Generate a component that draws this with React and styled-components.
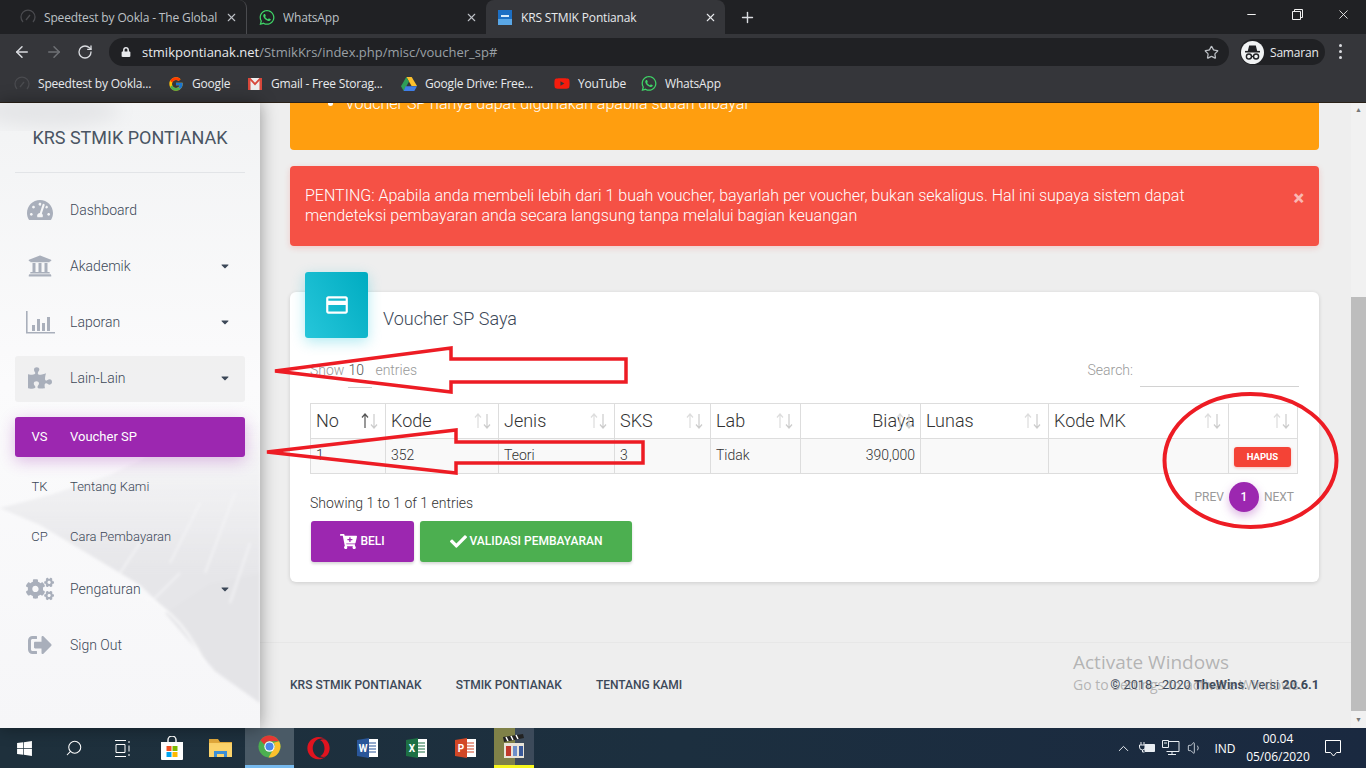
import styled, { createGlobalStyle } from "styled-components";
import { ArrowLeft, ArrowRight, RotateCw, Star, Plus, X, Minus, Search as SearchGlyph, ChevronUp, Volume1 } from "lucide-react";
import { FaWhatsapp, FaYoutube, FaWindows, FaOpera, FaTachometerAlt, FaUniversity, FaPuzzlePiece, FaCogs, FaSignOutAlt, FaCartPlus, FaCheck, FaLock, FaCaretDown } from "react-icons/fa";
import { FcGoogle } from "react-icons/fc";
import { MdCreditCard } from "react-icons/md";

const GlobalStyle = createGlobalStyle`
  html, body { margin: 0; padding: 0; overflow: hidden; }
  body { font-family: Roboto, "Liberation Sans", sans-serif; background: #eee; }
  * { box-sizing: border-box; }
`;

const Screen = styled.div`
  position: relative;
  width: 1366px;
  height: 768px;
  display: flex;
  flex-direction: column;
  overflow: hidden;
`;

/* browser */
const TabStrip = styled.div`
  height: 34px;
  background: #202124;
  display: flex;
  align-items: stretch;
  font: 12px "Open Sans", "Liberation Sans", sans-serif;
  letter-spacing: -0.15px;
  color: #bdc1c6;
`;
const Tab = styled.div`
  width: ${(p) => p.$w}px;
  display: flex;
  align-items: center;
  gap: 8px;
  padding: 0 8px 0 ${(p) => p.$left}px;
  border-radius: 8px 8px 0 0;
  background: ${(p) => (p.$active ? "#35363a" : "transparent")};
  color: ${(p) => (p.$active ? "#e8eaed" : "#bdc1c6")};
  border-right: ${(p) => (p.$sep ? "1px solid #4a4b4f" : "none")};
`;
const TabTitle = styled.span`
  flex: 1;
  white-space: nowrap;
  overflow: hidden;
`;
const NewTab = styled.div`
  width: 44px;
  display: flex;
  align-items: center;
  justify-content: center;
  color: #dadce0;
`;
const WindowButtons = styled.div`
  margin-left: auto;
  display: flex;
  color: #f1f1f1;
`;
const WindowButton = styled.div`
  width: 46px;
  height: 28px;
  display: flex;
  align-items: center;
  justify-content: center;
`;
const Favicon = styled.div`
  width: 16px;
  height: 16px;
  flex: none;
  display: flex;
  align-items: center;
  justify-content: center;
`;
const Toolbar = styled.div`
  height: 32px;
  background: #35363a;
  display: flex;
  align-items: flex-end;
  color: #dadce0;
  position: relative;
`;
const NavButtons = styled.div`
  width: 109px;
  height: 28px;
  display: flex;
  align-items: center;
  gap: 14px;
  padding-left: 13px;
`;
const Omnibox = styled.div`
  width: 1120px;
  height: 28px;
  border-radius: 14px;
  background: #202124;
  display: flex;
  align-items: center;
  padding: 0 10px 0 12px;
  font: 13px "Open Sans", "Liberation Sans", sans-serif;
  color: #9aa0a6;
`;
const Host = styled.span`
  color: #e8eaed;
  margin-left: 11px;
`;
const OmniStar = styled.div`
  margin-left: auto;
  display: flex;
  color: #bdc1c6;
`;
const ProfileChip = styled.div`
  margin: 0 0 1px 11px;
  width: 85px;
  height: 26px;
  border-radius: 13px;
  background: #202124;
  display: flex;
  align-items: center;
  gap: 6px;
  font: 12px "Open Sans", "Liberation Sans", sans-serif;
  letter-spacing: -0.2px;
  color: #e8eaed;
`;
const ProfileBadge = styled.div`
  width: 23px;
  height: 23px;
  margin-left: 1px;
  border-radius: 50%;
  background: #f1f3f4;
  display: flex;
  align-items: center;
  justify-content: center;
`;
const MenuDots = styled.div`
  margin: 0 0 7px 14px;
  display: flex;
  flex-direction: column;
  gap: 3px;
`;
const Dot = styled.i`
  width: 3px;
  height: 3px;
  border-radius: 50%;
  background: #dadce0;
`;
const Bookmarks = styled.div`
  height: 37px;
  background: #35363a;
  border-bottom: 1px solid #2a2118;
  display: flex;
  align-items: center;
  padding-left: 14px;
  padding-bottom: 1px;
  font: 12px "Open Sans", "Liberation Sans", sans-serif;
  letter-spacing: -0.2px;
  color: #e8eaed;
`;
const Bookmark = styled.div`
  width: ${(p) => p.$w}px;
  display: flex;
  align-items: center;
  gap: 8px;
  white-space: nowrap;
`;

/* page */
const Body = styled.div`
  flex: 1;
  min-height: 0;
  display: flex;
`;
const Sidebar = styled.aside`
  position: relative;
  width: 260px;
  flex: none;
  padding: 0 15px;
  background: linear-gradient(180deg, #f2f3f4 0, #fbfbfc 45%, #f6f6f8 100%);
  box-shadow: 0 0 16px rgba(0, 0, 0, 0.38);
  overflow: hidden;
  z-index: 2;
`;
const Mountain = styled.svg`
  position: absolute;
  left: 0;
  top: 0;
  width: 260px;
  height: 625px;
`;
const SideInner = styled.div`
  position: relative;
`;
const Brand = styled.div`
  height: 70px;
  padding-top: 24px;
  border-bottom: 1px solid #e2e4e7;
  margin-bottom: 15px;
  text-align: center;
  font-size: 18px;
  line-height: 22px;
  color: #4a5563;
`;
const NavItem = styled.div`
  height: ${(p) => (p.$sub ? 40 : 46)}px;
  margin-bottom: ${(p) => (p.$gap !== undefined ? p.$gap : 10)}px;
  display: flex;
  align-items: center;
  padding: 0 14px 2px 10px;
  border-radius: 3px;
  font-size: ${(p) => (p.$sub ? 13 : 14)}px;
  font-weight: 300;
  color: #3c4858;
  background: ${(p) => (p.$active ? "#9c27b0" : p.$hover ? "rgba(200,200,200,.2)" : "transparent")};
  ${(p) => p.$active && "color:#fff;font-weight:400;box-shadow:0 4px 16px rgba(156,39,176,.3);"}
`;
const NavIcon = styled.div`
  width: 30px;
  margin-right: 15px;
  display: flex;
  justify-content: center;
  color: #a9afbb;
  font-size: ${(p) => p.$size || 24}px;
`;
const NavAbbr = styled.div`
  width: 29px;
  margin-right: 16px;
  text-align: center;
  font-weight: inherit;
`;
const Caret = styled.div`
  margin-left: auto;
  display: flex;
  color: #3c4858;
  font-size: 12px;
`;

const Content = styled.main`
  flex: 1;
  min-width: 0;
  background: #eee;
  overflow: hidden;
`;
const Wrap = styled.div`
  padding: 0 32px 0 30px;
`;
const WarnAlert = styled.div`
  height: 47px;
  background: #ff9e0f;
  border-radius: 0 0 4px 4px;
  color: #fff;
  font-size: 16px;
  font-weight: 300;
  overflow: hidden;
  margin-bottom: 16px;
`;
const WarnList = styled.ul`
  margin: -10px 0 0;
  padding-left: 55px;
  line-height: 22px;
`;
const DangerAlert = styled.div`
  position: relative;
  height: 80px;
  background: #f55145;
  border-radius: 4px;
  box-shadow: 0 2px 6px rgba(244, 67, 54, 0.2);
  color: #fff;
  font-size: 16px;
  font-weight: 300;
  line-height: 20px;
  padding: 20px 60px 0 15px;
  margin-bottom: 46px;
`;
const AlertClose = styled.div`
  position: absolute;
  right: 15px;
  top: 22px;
  font-size: 20px;
  font-weight: 900;
  line-height: 20px;
  color: rgba(255, 255, 255, 0.6);
`;
const Card = styled.section`
  height: 290px;
  background: #fff;
  border-radius: 6px;
  box-shadow: 0 1px 4px rgba(0, 0, 0, 0.14);
  padding: 0 20px;
`;
const CardHeader = styled.div`
  display: flex;
  margin: 0 0 0 -5px;
  height: 0;
`;
const CardIcon = styled.div`
  width: 63px;
  height: 66px;
  margin-top: -20px;
  flex: none;
  border-radius: 3px;
  background: linear-gradient(60deg, #26c6da, #00acc1);
  box-shadow: 0 4px 14px rgba(0, 188, 212, 0.3);
  display: flex;
  align-items: center;
  justify-content: center;
  color: #fff;
  font-size: 26px;
`;
const CardTitle = styled.h4`
  margin: 15px 0 0 15px;
  font-size: 18px;
  font-weight: 300;
  line-height: 24px;
  color: #3c4858;
  white-space: nowrap;
`;
const Controls = styled.div`
  display: flex;
  justify-content: space-between;
  padding-top: 66px;
  height: 111px;
  font-size: 14px;
  font-weight: 300;
  color: #999;
`;
const ShowLabel = styled.div`
  display: flex;
  align-items: flex-start;
  line-height: 24px;
`;
const PageSize = styled.span`
  width: 24px;
  margin: 0 3px 0 4px;
  height: 30px;
  color: #555;
  border-bottom: 1px solid #d2d2d2;
`;
const SearchLabel = styled.div`
  display: flex;
  align-items: flex-start;
  line-height: 24px;
`;
const SearchInput = styled.div`
  width: 159px;
  height: 29px;
  margin-left: 7px;
  border-bottom: 1px solid #d2d2d2;
`;
const Table = styled.table`
  width: 987px;
  table-layout: fixed;
  border-collapse: collapse;
  color: #333;
`;
const HeadCell = styled.th`
  position: relative;
  height: 35px;
  padding: 0 5px 2px;
  border: 1px solid #ddd;
  font-size: 18px;
  font-weight: 300;
  text-align: ${(p) => (p.$right ? "right" : "left")};
  color: #333;
`;
const SortMark = styled.svg`
  position: absolute;
  right: 6px;
  top: 8px;
`;
const BodyCell = styled.td`
  height: 35px;
  padding: 0 5px 2px;
  border: 1px solid #ddd;
  font-size: 14px;
  font-weight: 300;
  background: #f9f9f9;
  text-align: ${(p) => (p.$right ? "right" : "left")};
`;
const DeleteButton = styled.button`
  display: block;
  margin: 3px auto 0 0;
  width: 57px;
  height: 20px;
  border: 0;
  border-radius: 3px;
  background: #f44336;
  color: #fff;
  font: 700 9.5px Roboto, sans-serif;
  box-shadow: 0 1px 3px rgba(244, 67, 54, 0.3);
`;
const Below = styled.div`
  display: flex;
  justify-content: space-between;
  align-items: flex-start;
  margin-right: 2px;
`;
const InfoBlock = styled.div`
  font-size: 14px;
  font-weight: 300;
  color: #333;
`;
const InfoText = styled.div`
  padding-top: 19px;
  line-height: 20px;
  margin-bottom: 8px;
`;
const ActionRow = styled.div`
  display: flex;
  gap: 6px;
  padding-left: 1px;
`;
const ActionButton = styled.button`
  width: ${(p) => p.$w}px;
  height: 41px;
  border: 0;
  border-radius: 3px;
  background: ${(p) => p.$bg};
  box-shadow: 0 2px 3px rgba(0, 0, 0, 0.16);
  color: #fff;
  font: 500 12px Roboto, sans-serif;
  display: flex;
  align-items: center;
  justify-content: center;
  gap: 3px;
  padding-bottom: 2px;
  svg { font-size: 17px; }
`;
const Pager = styled.div`
  display: flex;
  align-items: center;
  gap: 5px;
  margin-top: 8px;
  padding-right: 3px;
  font-size: 12px;
  font-weight: 400;
  color: #999;
`;
const PageDot = styled.div`
  width: 30px;
  height: 30px;
  border-radius: 50%;
  background: #9c27b0;
  box-shadow: 0 4px 10px rgba(156, 39, 176, 0.35);
  color: #fff;
  font-weight: 500;
  display: flex;
  align-items: center;
  justify-content: center;
`;
const Footer = styled.footer`
  margin-top: 60px;
  height: 84px;
  border-top: 1px solid #e7e7e7;
  padding: 0 32px 0 30px;
  display: flex;
  align-items: center;
  justify-content: space-between;
  font-size: 12px;
  color: #3c4858;
`;
const FooterLinks = styled.div`
  display: flex;
  gap: 34px;
  font-weight: 500;
`;
const Copy = styled.div`
  font-size: 12.75px;
  font-weight: 400;
  strong { font-weight: 700; }
`;
const ScrollTrack = styled.div`
  width: 15px;
  flex: none;
  background: #f1f1f1;
  display: flex;
  flex-direction: column;
  align-items: center;
  color: #777;
`;
const ScrollArrow = styled.div`
  height: 15px;
  width: 100%;
  display: flex;
  align-items: center;
  justify-content: center;
  font-size: 7px;
  line-height: 7px;
`;
const ScrollThumb = styled.div`
  width: 100%;
  height: 414px;
  margin-top: auto;
  margin-bottom: 2px;
  background: #bdbdbd;
`;

/* taskbar */
const Taskbar = styled.div`
  height: 40px;
  background: linear-gradient(90deg, #1e303c 0, #1c2f3f 50%, #1a2940 100%);
  display: flex;
  align-items: stretch;
  color: #fff;
  font: 12px "Open Sans", "Liberation Sans", sans-serif;
`;
const TaskSlot = styled.div`
  width: 49px;
  display: flex;
  align-items: center;
  justify-content: center;
  background: ${(p) => (p.$open ? "#4a5a66" : "transparent")};
  border-bottom: ${(p) => (p.$open ? "3px solid #76b9ed" : "none")};
`;
const MovieSlot = styled(TaskSlot)`
  width: 40px;
  margin-left: 4px;
  background: linear-gradient(90deg, #7f8148 0 53%, #3c4a5a 53% 100%);
  border-bottom: 3px solid #f7f71e;
`;
const Tray = styled.div`
  margin-left: auto;
  padding-right: 13px;
  display: flex;
  align-items: center;
`;
const TrayIcon = styled.div`
  width: 24px;
  display: flex;
  justify-content: center;
  color: #e8edf2;
`;
const TrayLang = styled.div`
  width: 36px;
  text-align: center;
`;
const Clock = styled.div`
  width: 70px;
  text-align: center;
  line-height: 18px;
`;
const Notify = styled.div`
  width: 40px;
  display: flex;
  justify-content: center;
`;

/* overlays */
const Marks = styled.svg`
  position: absolute;
  left: 0;
  top: 0;
  pointer-events: none;
  z-index: 5;
`;
const Watermark = styled.div`
  position: absolute;
  left: 1073px;
  top: 650px;
  color: rgba(130, 130, 130, 0.55);
  font: 14px "Open Sans", "Liberation Sans", sans-serif;
  z-index: 4;
  pointer-events: none;
`;
const WatermarkHead = styled.div`
  font-size: 19px;
  line-height: 25px;
`;

const SortIcon = ({ up = "#ddd", down = "#ccc" }) => (
  <SortMark width="20" height="18" viewBox="0 0 20 18" fill="none" strokeWidth="1.2">
    <path d="M6 16V2M3 5.5 6 2l3 3.5" stroke={up} />
    <path d="M15 2v14M12 12.5l3 3.5 3-3.5" stroke={down} />
  </SortMark>
);

const BarChart = () => (
  <svg width="29" height="24" viewBox="0 0 29 24" fill="#a9afbb">
    <path d="M0 1h1.6v21H29v1.6H0z" />
    <path d="M6 15h3v6H6zM11 9h3v12h-3zM16 13h3v8h-3zM21 7h3v14h-3z" />
  </svg>
);

const Incognito = () => (
  <svg width="19" height="19" viewBox="0 0 24 24" fill="none" stroke="#202124" strokeWidth="1.8">
    <path d="M7 10 8.5 4h7L17 10z" fill="#202124" />
    <path d="M2.5 11h19" strokeWidth="2" />
    <circle cx="7.5" cy="17" r="3.2" />
    <circle cx="16.5" cy="17" r="3.2" />
    <path d="M10.7 17h2.6" />
  </svg>
);

const Gauge = () => (
  <svg width="16" height="16" viewBox="0 0 16 16" fill="none" stroke="#4a4b4f" strokeWidth="1.3">
    <path d="M3 13a7 7 0 1 1 10 0" />
    <path d="M6 11l4-5" />
  </svg>
);

const Gmail = () => (
  <svg width="16" height="14" viewBox="0 0 16 14">
    <path d="M1 1h14v12H1z" fill="#eee" />
    <path d="M1 1h2.5v12H1zM12.5 1H15v12h-2.5z" fill="#d8483b" />
    <path d="M1 1h2.5L8 5.8 12.5 1H15L8 8.5z" fill="#d8483b" />
  </svg>
);

const Drive = () => (
  <svg width="16" height="14" viewBox="0 0 16 14">
    <path d="M5.3 0h5.4l5.3 9h-5.4z" fill="#fbc02d" />
    <path d="M5.3 0 8 4.6 2.7 14 0 9.2z" fill="#2e9e58" />
    <path d="M4.6 9.2H16L13.3 14H2.7z" fill="#3f7ee8" />
  </svg>
);

const ChromeLogo = () => (
  <svg width="23" height="23" viewBox="0 0 24 24">
    <circle cx="12" cy="12" r="11.5" fill="#4caf50" />
    <path d="M12 .5A11.5 11.5 0 0 1 22 6.5H12A5.6 5.6 0 0 0 6.7 10L2.4 5.6A11.5 11.5 0 0 1 12 .5z" fill="#e53935" />
    <path d="M22 6.5A11.5 11.5 0 0 1 11 23.4l5-8.5A5.6 5.6 0 0 0 16.4 8z" fill="#fbc02d" />
    <circle cx="12" cy="12" r="5.4" fill="#fff" />
    <circle cx="12" cy="12" r="4.2" fill="#4a86e8" />
  </svg>
);

const TaskView = () => (
  <svg width="17" height="17" viewBox="0 0 17 17" fill="none" stroke="#fff" strokeWidth="1">
    <path d="M1 .5h11M1 16.5h11M2 4.5h9v8H2zM15 1v2M15 5.5v6M15 14v2" />
  </svg>
);

const StoreBag = () => (
  <svg width="24" height="24" viewBox="0 0 24 24">
    <path d="M8 7V4a4 4 0 0 1 8 0v3" fill="none" stroke="#fff" strokeWidth="1.4" />
    <path d="M1 6h22v17a1 1 0 0 1-1 1H2a1 1 0 0 1-1-1z" fill="#fff" />
    <path d="M6.500 10h5v5h-5z" fill="#f25022" />
    <path d="M12.500 10h5v5h-5z" fill="#7fba00" />
    <path d="M6.500 16h5v5h-5z" fill="#00a4ef" />
    <path d="M12.500 16h5v5h-5z" fill="#ffb900" />
  </svg>
);

const Folder = () => (
  <svg width="23" height="20" viewBox="0 0 23 20">
    <path d="M0 1h9l2 3h12v15H0z" fill="#e2a93b" />
    <path d="M0 5h23v14H0z" fill="#fbd36b" />
    <path d="M5 19v-6h13v6h-3v-3H8v3z" fill="#3d8fd6" />
  </svg>
);

const OfficeIcon = ({ color, letter }) => (
  <svg width="22" height="22" viewBox="0 0 22 22">
    <path d="M7 2h14v18H7z" fill="#fff" />
    <path d="M9 6h10M9 9h10M9 12h10M9 15h10" stroke={color} strokeWidth="1.2" />
    <path d="M0 3l12-2v20L0 19z" fill={color} />
    <text x="6" y="14.500" textAnchor="middle" fontSize="10" fontWeight="700" fontFamily="Roboto" fill="#fff">{letter}</text>
  </svg>
);

const Clapper = () => (
  <svg width="24" height="26" viewBox="0 0 24 26">
    <path d="M1 3 21 0l1 4L2 8z" fill="#222" />
    <path d="M4 3l2 4M9 2l2 4M14 1l2 4" stroke="#fff" strokeWidth="1.5" />
    <path d="M2 9h20v15H2z" fill="#e9e4d8" />
    <path d="M4 12h5v10H4z" fill="#c0392b" />
    <path d="M11 12h4v10h-4z" fill="#6d8fc9" />
    <path d="M17 12h4v10h-4z" fill="#3b5a9a" />
  </svg>
);

const Battery = () => (
  <svg width="18" height="14" viewBox="0 0 18 14" fill="none" stroke="#e8edf2">
    <path d="M3 1v3M6 1v3M1.500 4h6v2a3 3 0 0 1-6 0z" />
    <path d="M4.500 9v2h2" />
    <path d="M7 3.500h9.500v7H7z" fill="#e8edf2" />
  </svg>
);

const Network = () => (
  <svg width="18" height="16" viewBox="0 0 18 16" fill="none" stroke="#e8edf2">
    <path d="M4.500 1.500H17v10H4.500M10 11.500v3M6 14.500h8" />
    <path d="M.5.500h6v7h-6zM2 3h3" fill="#1c2f3f" />
  </svg>
);

const Bubble = () => (
  <svg width="17" height="17" viewBox="0 0 17 17" fill="none" stroke="#fff">
    <path d="M.5.500h15v12h-4l-3 3.500-3-3.500h-5z" />
  </svg>
);

const KrsFavicon = () => (
  <svg width="14" height="15" viewBox="0 0 14 15">
    <rect width="14" height="15" fill="#1c6fc4" />
    <rect y="9" width="14" height="6" fill="#5aa7e6" />
    <rect x="3" y="5" width="8" height="2" fill="#d8ecfb" />
  </svg>
);

const cols = [75, 113, 116, 96, 90, 120, 128, 180, 69];

const heads = [
  { label: "No", up: "#555" },
  { label: "Kode" },
  { label: "Jenis" },
  { label: "SKS" },
  { label: "Lab" },
  { label: "Biaya", right: true },
  { label: "Lunas" },
  { label: "Kode MK" },
  { label: "" },
];

function App() {
  return (
    <Screen>
      <GlobalStyle />

      <TabStrip>
        <Tab $w={247} $left={20} $sep>
          <Favicon><Gauge /></Favicon>
          <TabTitle>Speedtest by Ookla - The Global</TabTitle>
          <X size={13} />
        </Tab>
        <Tab $w={239} $left={12}>
          <Favicon><FaWhatsapp size={17} color="#3fd467" /></Favicon>
          <TabTitle>WhatsApp</TabTitle>
          <X size={13} />
        </Tab>
        <Tab $w={239} $left={11} $active>
          <Favicon><KrsFavicon /></Favicon>
          <TabTitle>KRS STMIK Pontianak</TabTitle>
          <X size={13} />
        </Tab>
        <NewTab><Plus size={17} /></NewTab>
        <WindowButtons>
          <WindowButton><Minus size={13} /></WindowButton>
          <WindowButton>
            <svg width="11" height="11" viewBox="0 0 11 11" fill="none" stroke="#f1f1f1"><path d="M.5 2.500h8v8h-8zM2.500 2.500v-2h8v8h-2" /></svg>
          </WindowButton>
          <WindowButton><X size={15} strokeWidth={1.4} /></WindowButton>
        </WindowButtons>
      </TabStrip>

      <Toolbar>
        <NavButtons>
          <ArrowLeft size={18} />
          <ArrowRight size={18} color="#6f7175" />
          <RotateCw size={16} />
        </NavButtons>
        <Omnibox>
          <FaLock size={10} color="#e8eaed" />
          <Host>stmikpontianak.net</Host>/StmikKrs/index.php/misc/voucher_sp#
          <OmniStar><Star size={15} /></OmniStar>
        </Omnibox>
        <ProfileChip>
          <ProfileBadge><Incognito /></ProfileBadge>
          Samaran
        </ProfileChip>
        <MenuDots><Dot /><Dot /><Dot /></MenuDots>
      </Toolbar>

      <Bookmarks>
        <Bookmark $w={154}><Favicon><Gauge /></Favicon>Speedtest by Ookla...</Bookmark>
        <Bookmark $w={79}><Favicon><FcGoogle size={16} /></Favicon>Google</Bookmark>
        <Bookmark $w={154}><Favicon><Gmail /></Favicon>Gmail - Free Storag...</Bookmark>
        <Bookmark $w={153}><Favicon><Drive /></Favicon>Google Drive: Free...</Bookmark>
        <Bookmark $w={87}><Favicon><FaYoutube size={17} color="#f61c0d" /></Favicon>YouTube</Bookmark>
        <Bookmark $w={90}><Favicon><FaWhatsapp size={17} color="#3fd467" /></Favicon>WhatsApp</Bookmark>
      </Bookmarks>

      <Body>
        <Sidebar>
          <Mountain viewBox="0 0 260 625">
            <defs>
              <linearGradient id="rock" x1="0" y1="310" x2="0" y2="470" gradientUnits="userSpaceOnUse">
                <stop offset="0" stopColor="#e6e6e9" stopOpacity="0" />
                <stop offset="1" stopColor="#e6e6e9" />
              </linearGradient>
              <filter id="soft"><feGaussianBlur stdDeviation="1.500" /></filter>
              <filter id="cloud"><feGaussianBlur stdDeviation="9" /></filter>
            </defs>
            <ellipse cx="50" cy="8" rx="70" ry="16" fill="#e4e5e7" filter="url(#cloud)" />
            <g filter="url(#soft)">
              <path d="M0 405 50 392 110 372 175 340 260 318V600L215 568 190 530 140 482 90 452 40 422z" fill="url(#rock)" />
              <path d="M165 510 210 480 260 470V600L215 568z" fill="#e4e4e7" />
              <path d="M120 470 140 440M170 460 200 400M205 470 235 390M150 500 180 470M230 500 250 440" stroke="#f5f5f7" strokeWidth="1.500" fill="none" />
              <path d="M130 490C160 495 185 520 205 560" stroke="#fafafb" strokeWidth="2" fill="none" />
            </g>
          </Mountain>
          <SideInner>
            <Brand>KRS STMIK PONTIANAK</Brand>
            <NavItem><NavIcon $size={26}><FaTachometerAlt /></NavIcon>Dashboard</NavItem>
            <NavItem><NavIcon><FaUniversity /></NavIcon>Akademik<Caret><FaCaretDown /></Caret></NavItem>
            <NavItem><NavIcon><BarChart /></NavIcon>Laporan<Caret><FaCaretDown /></Caret></NavItem>
            <NavItem $hover $gap={15}><NavIcon><FaPuzzlePiece /></NavIcon>Lain-Lain<Caret><FaCaretDown /></Caret></NavItem>
            <NavItem $sub $active><NavAbbr>VS</NavAbbr>Voucher SP</NavItem>
            <NavItem $sub><NavAbbr>TK</NavAbbr>Tentang Kami</NavItem>
            <NavItem $sub><NavAbbr>CP</NavAbbr>Cara Pembayaran</NavItem>
            <NavItem><NavIcon $size={28}><FaCogs /></NavIcon>Pengaturan<Caret><FaCaretDown /></Caret></NavItem>
            <NavItem><NavIcon><FaSignOutAlt /></NavIcon>Sign Out</NavItem>
          </SideInner>
        </Sidebar>

        <Content>
          <Wrap>
            <WarnAlert>
              <WarnList>
                <li>Voucher SP hanya dapat digunakan apabila sudah dibayar</li>
              </WarnList>
            </WarnAlert>
            <DangerAlert>
              PENTING: Apabila anda membeli lebih dari 1 buah voucher, bayarlah per voucher, bukan sekaligus. Hal ini supaya sistem dapat mendeteksi pembayaran anda secara langsung tanpa melalui bagian keuangan
              <AlertClose>×</AlertClose>
            </DangerAlert>

            <Card>
              <CardHeader>
                <CardIcon><MdCreditCard /></CardIcon>
                <CardTitle>Voucher SP Saya</CardTitle>
              </CardHeader>
              <Controls>
                <ShowLabel>Show<PageSize>10</PageSize>entries</ShowLabel>
                <SearchLabel>Search:<SearchInput /></SearchLabel>
              </Controls>
              <Table>
                <colgroup>
                  {cols.map((w, i) => <col key={i} width={w} />)}
                </colgroup>
                <thead>
                  <tr>
                    {heads.map((h, i) => (
                      <HeadCell key={i} $right={h.right}>
                        {h.label}
                        <SortIcon up={h.up} />
                      </HeadCell>
                    ))}
                  </tr>
                </thead>
                <tbody>
                  <tr>
                    <BodyCell>1</BodyCell>
                    <BodyCell>352</BodyCell>
                    <BodyCell>Teori</BodyCell>
                    <BodyCell>3</BodyCell>
                    <BodyCell>Tidak</BodyCell>
                    <BodyCell $right>390,000</BodyCell>
                    <BodyCell />
                    <BodyCell />
                    <BodyCell><DeleteButton>HAPUS</DeleteButton></BodyCell>
                  </tr>
                </tbody>
              </Table>
              <Below>
                <InfoBlock>
                  <InfoText>Showing 1 to 1 of 1 entries</InfoText>
                  <ActionRow>
                    <ActionButton $w={103} $bg="#9c27b0"><FaCartPlus />BELI</ActionButton>
                    <ActionButton $w={212} $bg="#4caf50"><FaCheck />VALIDASI PEMBAYARAN</ActionButton>
                  </ActionRow>
                </InfoBlock>
                <Pager>PREV<PageDot>1</PageDot>NEXT</Pager>
              </Below>
            </Card>
          </Wrap>

          <Footer>
            <FooterLinks>
              <span>KRS STMIK PONTIANAK</span>
              <span>STMIK PONTIANAK</span>
              <span>TENTANG KAMI</span>
            </FooterLinks>
            <Copy>© 2018 - 2020 <strong>TheWins</strong>. Versi <strong>20.6.1</strong></Copy>
          </Footer>
        </Content>

        <ScrollTrack>
          <ScrollArrow>▲</ScrollArrow>
          <ScrollThumb />
          <ScrollArrow>▼</ScrollArrow>
        </ScrollTrack>
      </Body>

      <Taskbar>
        <TaskSlot><FaWindows size={17} /></TaskSlot>
        <TaskSlot><SearchGlyph size={18} strokeWidth={1.4} style={{ transform: "scaleX(-1)" }} /></TaskSlot>
        <TaskSlot><TaskView /></TaskSlot>
        <TaskSlot><StoreBag /></TaskSlot>
        <TaskSlot><Folder /></TaskSlot>
        <TaskSlot $open><ChromeLogo /></TaskSlot>
        <TaskSlot><FaOpera size={23} color="#e0141f" /></TaskSlot>
        <TaskSlot><OfficeIcon color="#2a5699" letter="W" /></TaskSlot>
        <TaskSlot><OfficeIcon color="#1d7044" letter="X" /></TaskSlot>
        <TaskSlot><OfficeIcon color="#d24726" letter="P" /></TaskSlot>
        <MovieSlot><Clapper /></MovieSlot>
        <Tray>
          <TrayIcon><ChevronUp size={17} strokeWidth={1.4} /></TrayIcon>
          <TrayIcon><Battery /></TrayIcon>
          <TrayIcon><Network /></TrayIcon>
          <TrayIcon><Volume1 size={16} strokeWidth={1.2} /></TrayIcon>
          <TrayLang>IND</TrayLang>
          <Clock>00.04<br />05/06/2020</Clock>
          <Notify><Bubble /></Notify>
        </Tray>
      </Taskbar>

      <Watermark>
        <WatermarkHead>Activate Windows</WatermarkHead>
        Go to Settings to activate Windows.
      </Watermark>

      <Marks width="1366" height="768" fill="none" stroke="#ed1c24" strokeWidth="3.5">
        <path d="M275 371 451 348V359H626V382H451V392z" />
        <path d="M267 452 456 430V442H643V463H456V473z" />
        <ellipse cx="1250.500" cy="460.500" rx="86" ry="66.500" strokeWidth="4" />
      </Marks>
    </Screen>
  );
}

export default App;
